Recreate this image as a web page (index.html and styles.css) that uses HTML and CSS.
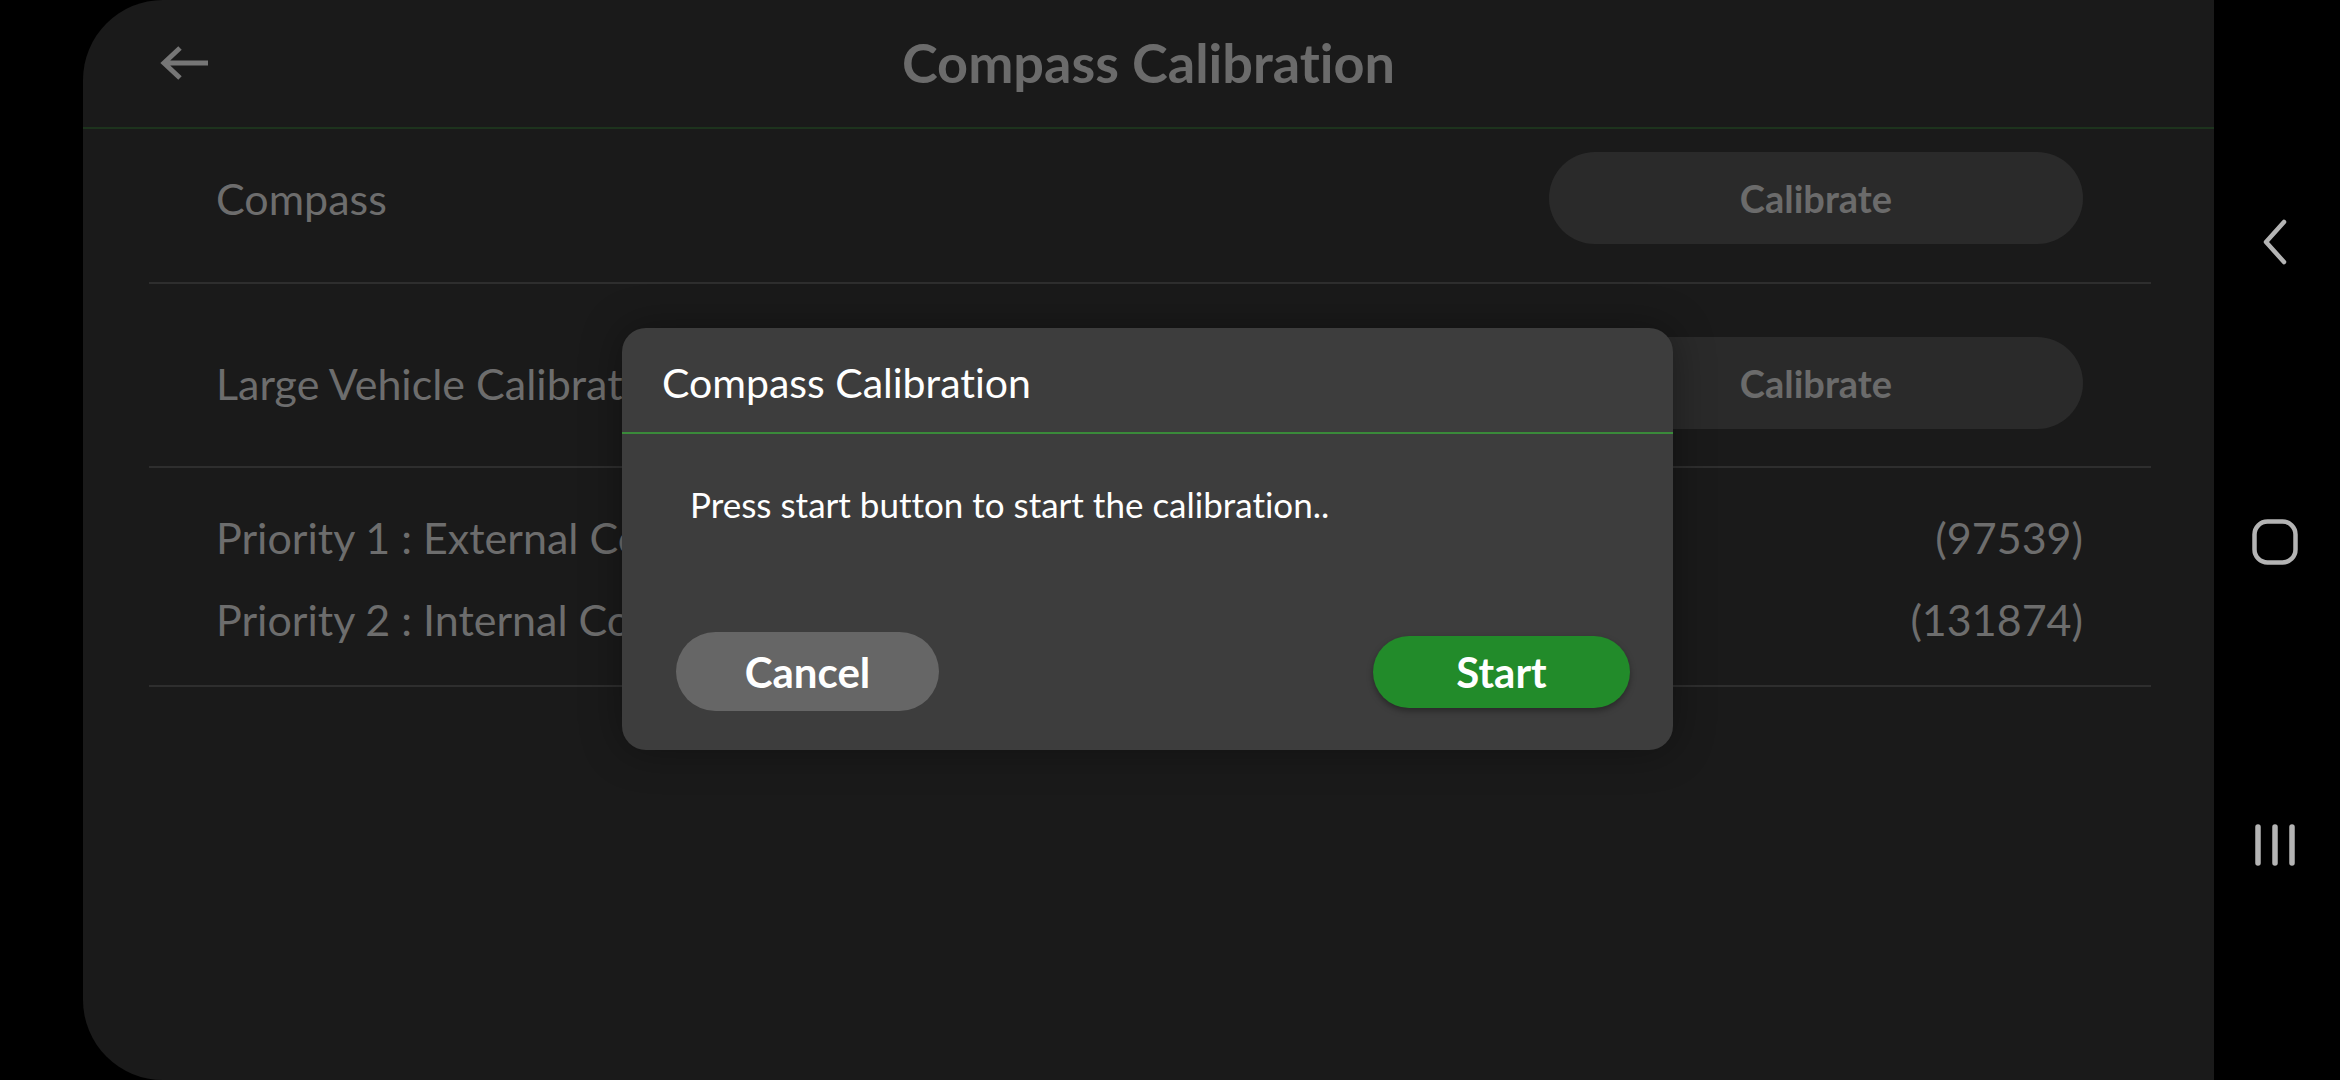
FILE: index.html
```html
<!DOCTYPE html>
<html lang="en">
<head>
<meta charset="utf-8">
<title>Compass Calibration</title>
<link rel="stylesheet" href="styles.css">
</head>
<body>
<div class="screen">
  <main class="panel">
    <header class="header">
      <button class="back" aria-label="Back">
        <svg width="52" height="36" viewBox="0 0 52 36"><path d="M49 18H5M21 3L5 18L21 33" fill="none" stroke="#767676" stroke-width="5" stroke-linecap="butt" stroke-linejoin="miter"/></svg>
      </button>
      <h1 class="title">Compass Calibration</h1>
    </header>
    <section class="content">
      <div class="row row-first">
        <span class="label">Compass</span>
        <button class="calibrate">Calibrate</button>
      </div>
      <div class="row row-second">
        <span class="label">Large Vehicle Calibration</span>
        <button class="calibrate">Calibrate</button>
      </div>
      <div class="priorities">
        <div class="prio"><span>Priority 1 : External Compass</span><span>(97539)</span></div>
        <div class="prio"><span>Priority 2 : Internal Compass</span><span>(131874)</span></div>
      </div>
    </section>
    <div class="dialog">
      <div class="dialog-head">Compass Calibration</div>
      <div class="dialog-body">Press start button to start the calibration..</div>
      <div class="dialog-actions">
        <button class="btn-cancel">Cancel</button>
        <button class="btn-start">Start</button>
      </div>
    </div>
  </main>
  <nav class="navbar">
    <svg class="nav-icon nav-back" width="30" height="48" viewBox="0 0 30 48"><path d="M24 4L6 24L24 44" fill="none" stroke="#b4b4b4" stroke-width="4.5" stroke-linecap="round" stroke-linejoin="round"/></svg>
    <svg class="nav-icon nav-home" width="50" height="50" viewBox="0 0 50 50"><rect x="4.5" y="4.5" width="41" height="41" rx="13" fill="none" stroke="#b4b4b4" stroke-width="4.5"/></svg>
    <svg class="nav-icon nav-recent" width="46" height="50" viewBox="0 0 46 50"><path d="M6 7V43M23 7V43M40 7V43" fill="none" stroke="#b4b4b4" stroke-width="5.5" stroke-linecap="round"/></svg>
  </nav>
</div>
</body>
</html>
```

FILE: styles.css
```css
* { box-sizing: border-box; }
html, body { margin: 0; padding: 0; }
body {
  background: #000;
  font-family: "Lato", "Noto Sans", sans-serif;
  font-variant-ligatures: none;
  width: 2340px;
  height: 1080px;
  overflow: hidden;
}
button { font-family: inherit; font-variant-ligatures: none; border: none; cursor: pointer; }

.screen {
  display: flex;
  width: 2340px;
  height: 1080px;
}

.panel {
  position: relative;
  margin-left: 83px;
  width: 2131px;
  height: 1080px;
  background: #1a1a1a;
  border-radius: 80px 0 0 80px;
}

.header {
  position: relative;
  height: 129px;
  border-bottom: 2px solid #1d331d;
  display: flex;
  align-items: center;
  justify-content: center;
}
.back {
  position: absolute;
  left: 76px;
  top: 45px;
  background: none;
  padding: 0;
  display: flex;
}
.title {
  margin: 0 0 2px 0;
  font-size: 54px;
  font-weight: 700;
  color: #6b6b6b;
}

.content {
  padding: 0 63px 0 66px;
}
.row {
  display: flex;
  align-items: center;
  justify-content: space-between;
  padding: 0 68px 0 67px;
  border-bottom: 2px solid #2e2e2e;
}
.row-first { padding-top: 23px; padding-bottom: 38px; }
.row-second { padding-top: 53px; padding-bottom: 37px; }
.label {
  font-size: 43px;
  color: #6d6d6d;
}
.calibrate {
  width: 534px;
  height: 92px;
  border-radius: 46px;
  background: #2a2a2a;
  color: #6b6b6b;
  font-size: 38px;
  font-weight: 700;
}

.priorities {
  padding: 41px 68px 36px 67px;
  border-bottom: 2px solid #2e2e2e;
  display: flex;
  flex-direction: column;
  gap: 24px;
}
.prio {
  display: flex;
  justify-content: space-between;
  font-size: 43px;
  line-height: 58px;
  color: #6d6d6d;
}

.dialog {
  position: absolute;
  left: 539px;
  top: 328px;
  width: 1051px;
  height: 422px;
  background: #3d3d3d;
  border-radius: 24px;
  box-shadow: 0 0 40px rgba(0,0,0,0.35);
  display: flex;
  flex-direction: column;
}
.dialog-head {
  height: 106px;
  padding: 30px 0 0 40px;
  border-bottom: 2px solid #3a8a3a;
  color: #fff;
  font-size: 41px;
}
.dialog-body {
  padding: 49px 0 0 68px;
  color: #fff;
  font-size: 35px;
  flex: 1;
}
.dialog-actions {
  display: flex;
  justify-content: space-between;
  align-items: center;
  padding: 0 43px 39px 54px;
}
.btn-cancel {
  width: 263px;
  height: 79px;
  border-radius: 40px;
  background: #666;
  color: #fff;
  font-size: 42px;
  font-weight: 700;
}
.btn-start {
  width: 257px;
  height: 72px;
  border-radius: 36px;
  background: #228b2a;
  color: #fff;
  font-size: 42px;
  font-weight: 700;
  box-shadow: 0 3px 6px rgba(0,0,0,0.35);
}

.navbar {
  flex: 1;
  display: flex;
  flex-direction: column;
  align-items: center;
  padding-top: 218px;
}
.nav-icon { display: block; margin-left: -4px; }
.nav-back { margin-bottom: 251px; }
.nav-home { margin-bottom: 253px; }
```
